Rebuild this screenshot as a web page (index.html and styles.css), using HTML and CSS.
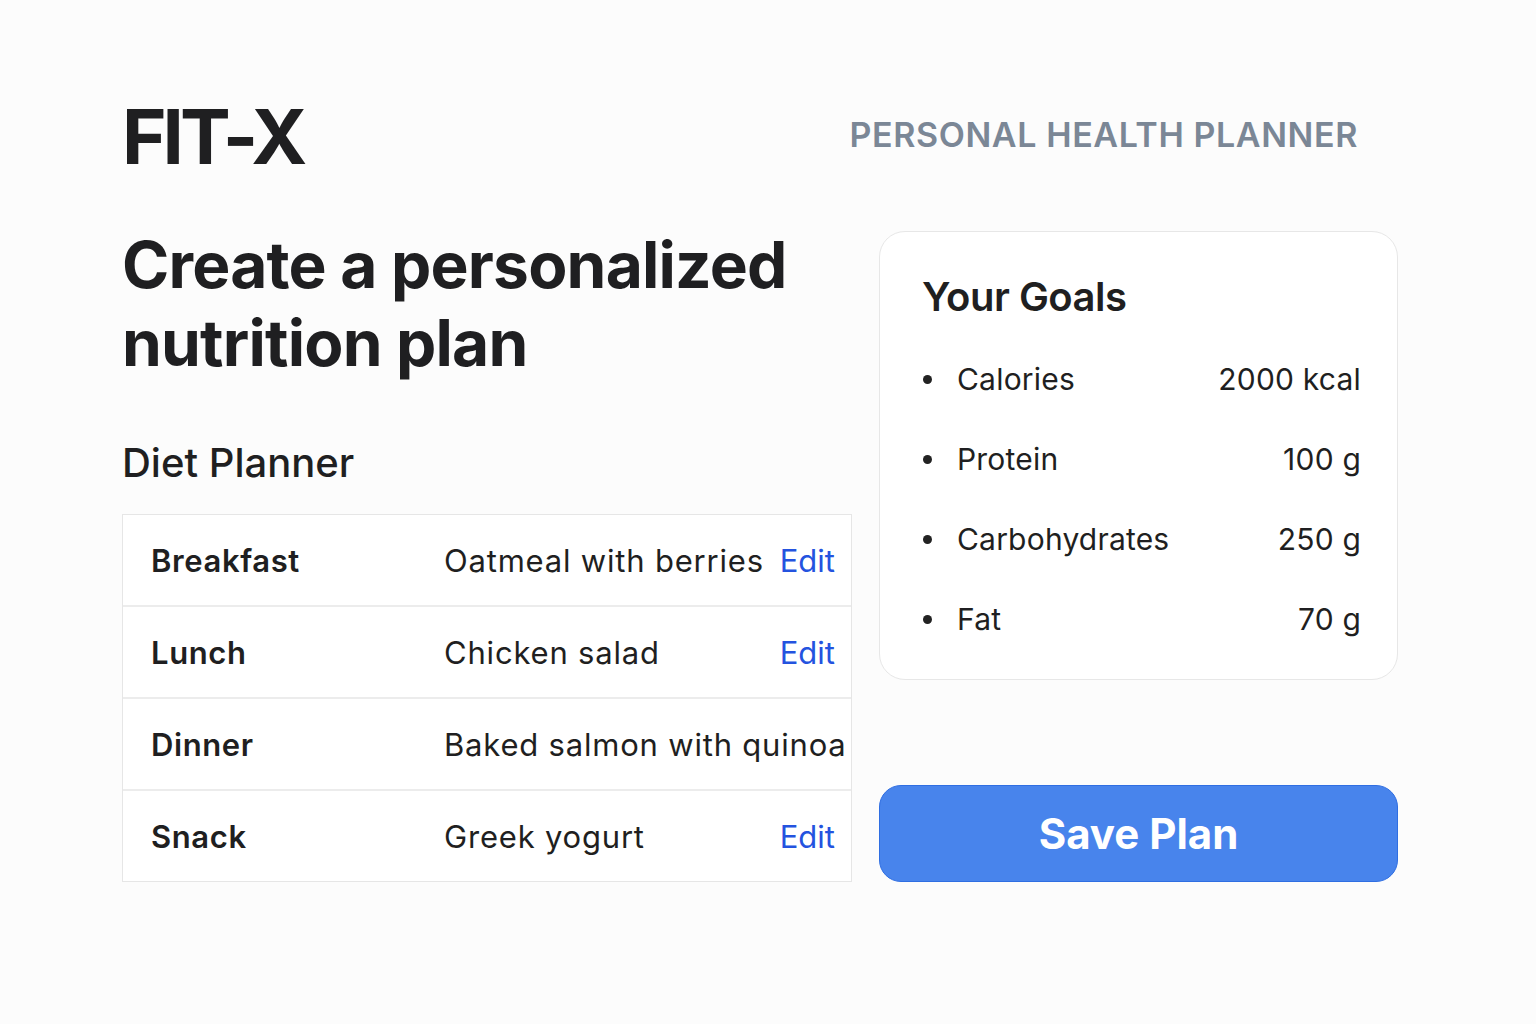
FILE: index.html
```html
<!DOCTYPE html>
<html lang="en">
<head>
  <meta charset="UTF-8">
  <title>FIT-X</title>
  <link rel="stylesheet" href="styles.css">
</head>
<body>
  <div class="page">
    <!-- Top bar -->
    <header class="topbar">
      <div class="logo">FIT-X</div>
      <div class="tagline">PERSONAL HEALTH PLANNER</div>
    </header>

    <main class="layout">
      <!-- Left column: planner -->
      <section class="planner">
        <h1 class="headline">Create a personalized nutrition plan</h1>
        <h2 class="section-title">Diet Planner</h2>
        <div class="meals">
          <div class="meal-row">
            <span class="meal-name">Breakfast</span>
            <span class="meal-food">Oatmeal with berries</span>
            <a class="meal-edit" href="#">Edit</a>
          </div>
          <div class="meal-row">
            <span class="meal-name">Lunch</span>
            <span class="meal-food">Chicken salad</span>
            <a class="meal-edit" href="#">Edit</a>
          </div>
          <div class="meal-row">
            <span class="meal-name">Dinner</span>
            <span class="meal-food">Baked salmon with quinoa</span>
          </div>
          <div class="meal-row">
            <span class="meal-name">Snack</span>
            <span class="meal-food">Greek yogurt</span>
            <a class="meal-edit" href="#">Edit</a>
          </div>
        </div>
      </section>

      <!-- Right column: goals -->
      <aside class="side">
        <div class="goals">
          <h2 class="goals-title">Your Goals</h2>
          <ul class="goal-list">
            <li><span>Calories</span><span>2000 kcal</span></li>
            <li><span>Protein</span><span>100 g</span></li>
            <li><span>Carbohydrates</span><span>250 g</span></li>
            <li><span>Fat</span><span>70 g</span></li>
          </ul>
        </div>
        <button class="save">Save Plan</button>
      </aside>
    </main>
  </div>
</body>
</html>
```

FILE: styles.css
```css
/* General styles */
body {
  margin: 0;
  background: #fcfcfc;
  color: #1f1f21;
  font-family: Inter, "Noto Sans", sans-serif;
}

.page {
  padding: 96px 138px 0 122px;
}

/* Top bar */
.topbar {
  display: flex;
  justify-content: space-between;
  align-items: center;
  padding-right: 40px;
}

.logo {
  font-size: 76px;
  font-weight: 700;
  letter-spacing: -4px;
  line-height: 80px;
}

.tagline {
  font-size: 34px;
  font-weight: 600;
  color: #7b8796;
  letter-spacing: 0.6px;
  margin-top: -4px;
}

/* Layout */
.layout {
  display: grid;
  grid-template-columns: 730px 519px;
  gap: 27px;
  margin-top: 55px;
}

.headline {
  margin: -5px 0 0;
  font-size: 64px;
  font-weight: 700;
  letter-spacing: -0.8px;
  line-height: 78px;
  padding-right: 20px;
}

.section-title {
  margin: 56px 0 27px;
  font-size: 40px;
  font-weight: 500;
  letter-spacing: 0;
}

/* Meal table */
.meals {
  border: 1px solid #e6e6e6;
  background: #fff;
}

.meal-row {
  display: flex;
  align-items: center;
  height: 90px;
  padding: 0 16px 0 28px;
  border-bottom: 2px solid #ececec;
  font-size: 31px;
}

.meal-row:last-child {
  border-bottom: none;
}

.meal-name {
  flex-shrink: 0;
  width: 293px;
  font-weight: 600;
  letter-spacing: 0.6px;
}

.meal-food {
  flex: 1 0 auto;
  white-space: nowrap;
  letter-spacing: 0.8px;
}

.meal-edit {
  color: #2453df;
  text-decoration: none;
}

/* Goals card */
.side {
  display: flex;
  flex-direction: column;
  justify-content: space-between;
}

.goals {
  background: #fff;
  border: 1px solid #e7e7e7;
  border-radius: 26px;
  padding: 40px 36px 20px 42px;
}

.goals-title {
  margin: 0 0 18px;
  font-size: 40px;
  font-weight: 600;
  letter-spacing: -0.5px;
}

.goal-list {
  list-style: none;
  margin: 0;
  padding: 0;
}

.goal-list li {
  display: flex;
  justify-content: space-between;
  align-items: center;
  height: 80px;
  font-size: 30px;
  letter-spacing: 0.2px;
  position: relative;
  padding-left: 35px;
}

.goal-list li::before {
  content: "";
  position: absolute;
  left: 1px;
  top: 36px;
  width: 9px;
  height: 9px;
  border-radius: 50%;
  background: #222;
}

/* Save button */
.save {
  height: 97px;
  background: #4884ec;
  border: 1px solid #2f6ee2;
  border-radius: 22px;
  color: #fff;
  font-family: inherit;
  font-size: 42px;
  font-weight: 700;
  cursor: pointer;
}
```
